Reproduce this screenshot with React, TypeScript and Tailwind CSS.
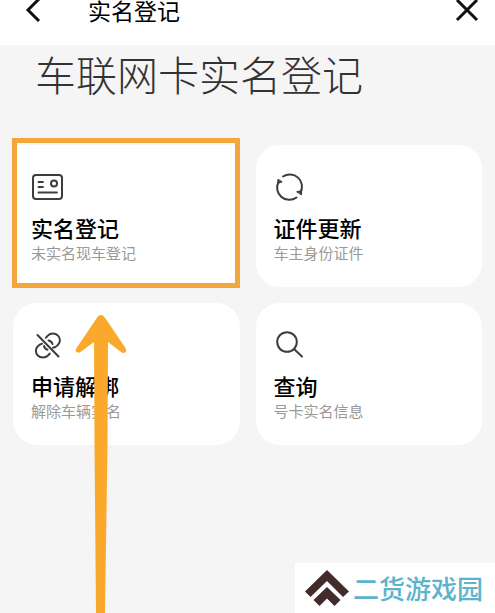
import type { ReactNode } from "react";

const iconProps = {
  fill: "none",
  stroke: "#3d3d3d",
  strokeWidth: 2,
  strokeLinecap: "round" as const,
  strokeLinejoin: "round" as const,
  className: "h-8 w-8",
  viewBox: "0 0 32 32",
  "aria-hidden": true,
};

function CardIcon() {
  return (
    <svg {...iconProps}>
      <rect x="2" y="4" width="29" height="24" rx="3" />
      <path d="M7.500 11h4.500M7.500 16h4.500M7.500 21.500h18.500" strokeWidth="1.800" />
      <circle cx="23" cy="12.500" r="3" />
    </svg>
  );
}

function RefreshIcon() {
  return (
    <svg {...iconProps}>
      <path d="M9 5.500A12.200 12.200 0 0 1 26.500 21.500" />
      <path d="M22.500 26.500A12.200 12.200 0 0 1 4.500 11" />
      <path d="M4 8.500l-.2 4 4-1.500zM27.500 23.500l.2-4-4.700 1.200z" fill="#3d3d3d" strokeWidth="1" />
    </svg>
  );
}

function UnlinkIcon() {
  return (
    <svg {...iconProps}>
      <path d="M6.500 6L27.500 27.500" />
      <path d="M14.800 8.800l2-2.200a7.200 7.200 0 0 1 10.200 0a6.500 6.500 0 0 1 0 9.200q-2 2.200-5 3" />
      <path d="M18.800 24.500l-1.800 2a7.200 7.200 0 0 1-10.200 0a6.500 6.500 0 0 1 0-9.200q1.800-2 4.200-2.500" />
      <path d="M17.500 11.500q3 .5 4 3.500M13 17q.5 2.800 3.500 3.800" />
    </svg>
  );
}

function SearchIcon() {
  return (
    <svg {...iconProps}>
      <circle cx="13" cy="13" r="9.800" />
      <path d="M20 20l8 7.500" />
    </svg>
  );
}

type Service = {
  title: string;
  note: string;
  icon: ReactNode;
  highlighted?: boolean;
};

const services: Service[] = [
  { title: "实名登记", note: "未实名现车登记", icon: <CardIcon />, highlighted: true },
  { title: "证件更新", note: "车主身份证件", icon: <RefreshIcon /> },
  { title: "申请解绑", note: "解除车辆实名", icon: <UnlinkIcon /> },
  { title: "查询", note: "号卡实名信息", icon: <SearchIcon /> },
];

function ServiceCard({ title, note, icon, highlighted }: Service) {
  return (
    <button
      type="button"
      className={`relative flex flex-col items-start bg-white px-[18px] pt-[26px] pb-6 text-left ${
        highlighted ? "rounded-none" : "rounded-3xl"
      }`}
    >
      {icon}
      <span className="mt-2 text-[22px] leading-8 font-medium text-black">{title}</span>
      <span className="text-[15px] leading-5 text-[#999999]">{note}</span>
      {highlighted && (
        <span className="absolute -top-[7px] right-0 -bottom-px -left-px border-[5px] border-[#f2a63c]" />
      )}
    </button>
  );
}

export default function App() {
  return (
    <div className="relative flex min-h-screen flex-col overflow-hidden bg-[#f5f5f5] font-['Noto_Sans_CJK_SC',sans-serif]">
      <header className="flex items-start bg-white px-4 pb-[25px]">
        <button type="button" aria-label="返回" className="h-5 w-8">
          <svg viewBox="0 0 32 20" className="h-5 w-8 overflow-visible" fill="none" stroke="#111111" strokeWidth="3">
            <path d="M23 -1L12 10L23 21" />
          </svg>
        </button>
        <h1 className="ml-10 text-[23px] leading-5 text-black">实名登记</h1>
        <button type="button" aria-label="关闭" className="ml-auto h-5 w-6">
          <svg viewBox="0 0 24 20" className="h-5 w-6 overflow-visible" fill="none" stroke="#111111" strokeWidth="3">
            <path d="M2 0L22 20M22 0L2 20" />
          </svg>
        </button>
      </header>

      <main className="px-[13px]">
        <h2 className="px-[22px] text-[41px] leading-[56px] font-light text-[#333333]">车联网卡实名登记</h2>
        <div className="mt-11 grid grid-cols-2 gap-4">
          {services.map((service) => (
            <ServiceCard key={service.title} {...service} />
          ))}
        </div>
      </main>

      {/* pointer to the highlighted card */}
      <svg
        viewBox="0 0 52 298"
        className="pointer-events-none absolute top-[315px] left-[75px] h-[298px] w-[52px]"
        fill="#fba92d"
        aria-hidden="true"
      >
        <path d="M26 0Q28 0 29.500 2L50.500 33Q52 36 50 37.500Q48.500 38.500 46 37L33 27L32.500 130L30 298H21L19.500 130L19 27L5.500 37Q3 38.500 1.500 37Q0 35.500 1.500 33L22.500 2Q24 0 26 0Z" />
      </svg>

      <footer className="relative mt-auto flex h-[50px] w-[200px] items-center self-end bg-white pl-[10px]">
        <svg viewBox="0 0 44 36" className="h-9 w-11" fill="#412b2b" aria-hidden="true">
          <path d="M22 0L44 21.500L38 27L22 11L5.500 27L0 21.500z" />
          <path d="M22 17L35.500 30L29.500 36L22 28.500L14.500 36L8.500 30z" />
        </svg>
        <span className="ml-1 text-[26px] leading-8 font-medium whitespace-nowrap text-[#5cb3cc]">二货游戏园</span>
      </footer>
    </div>
  );
}
